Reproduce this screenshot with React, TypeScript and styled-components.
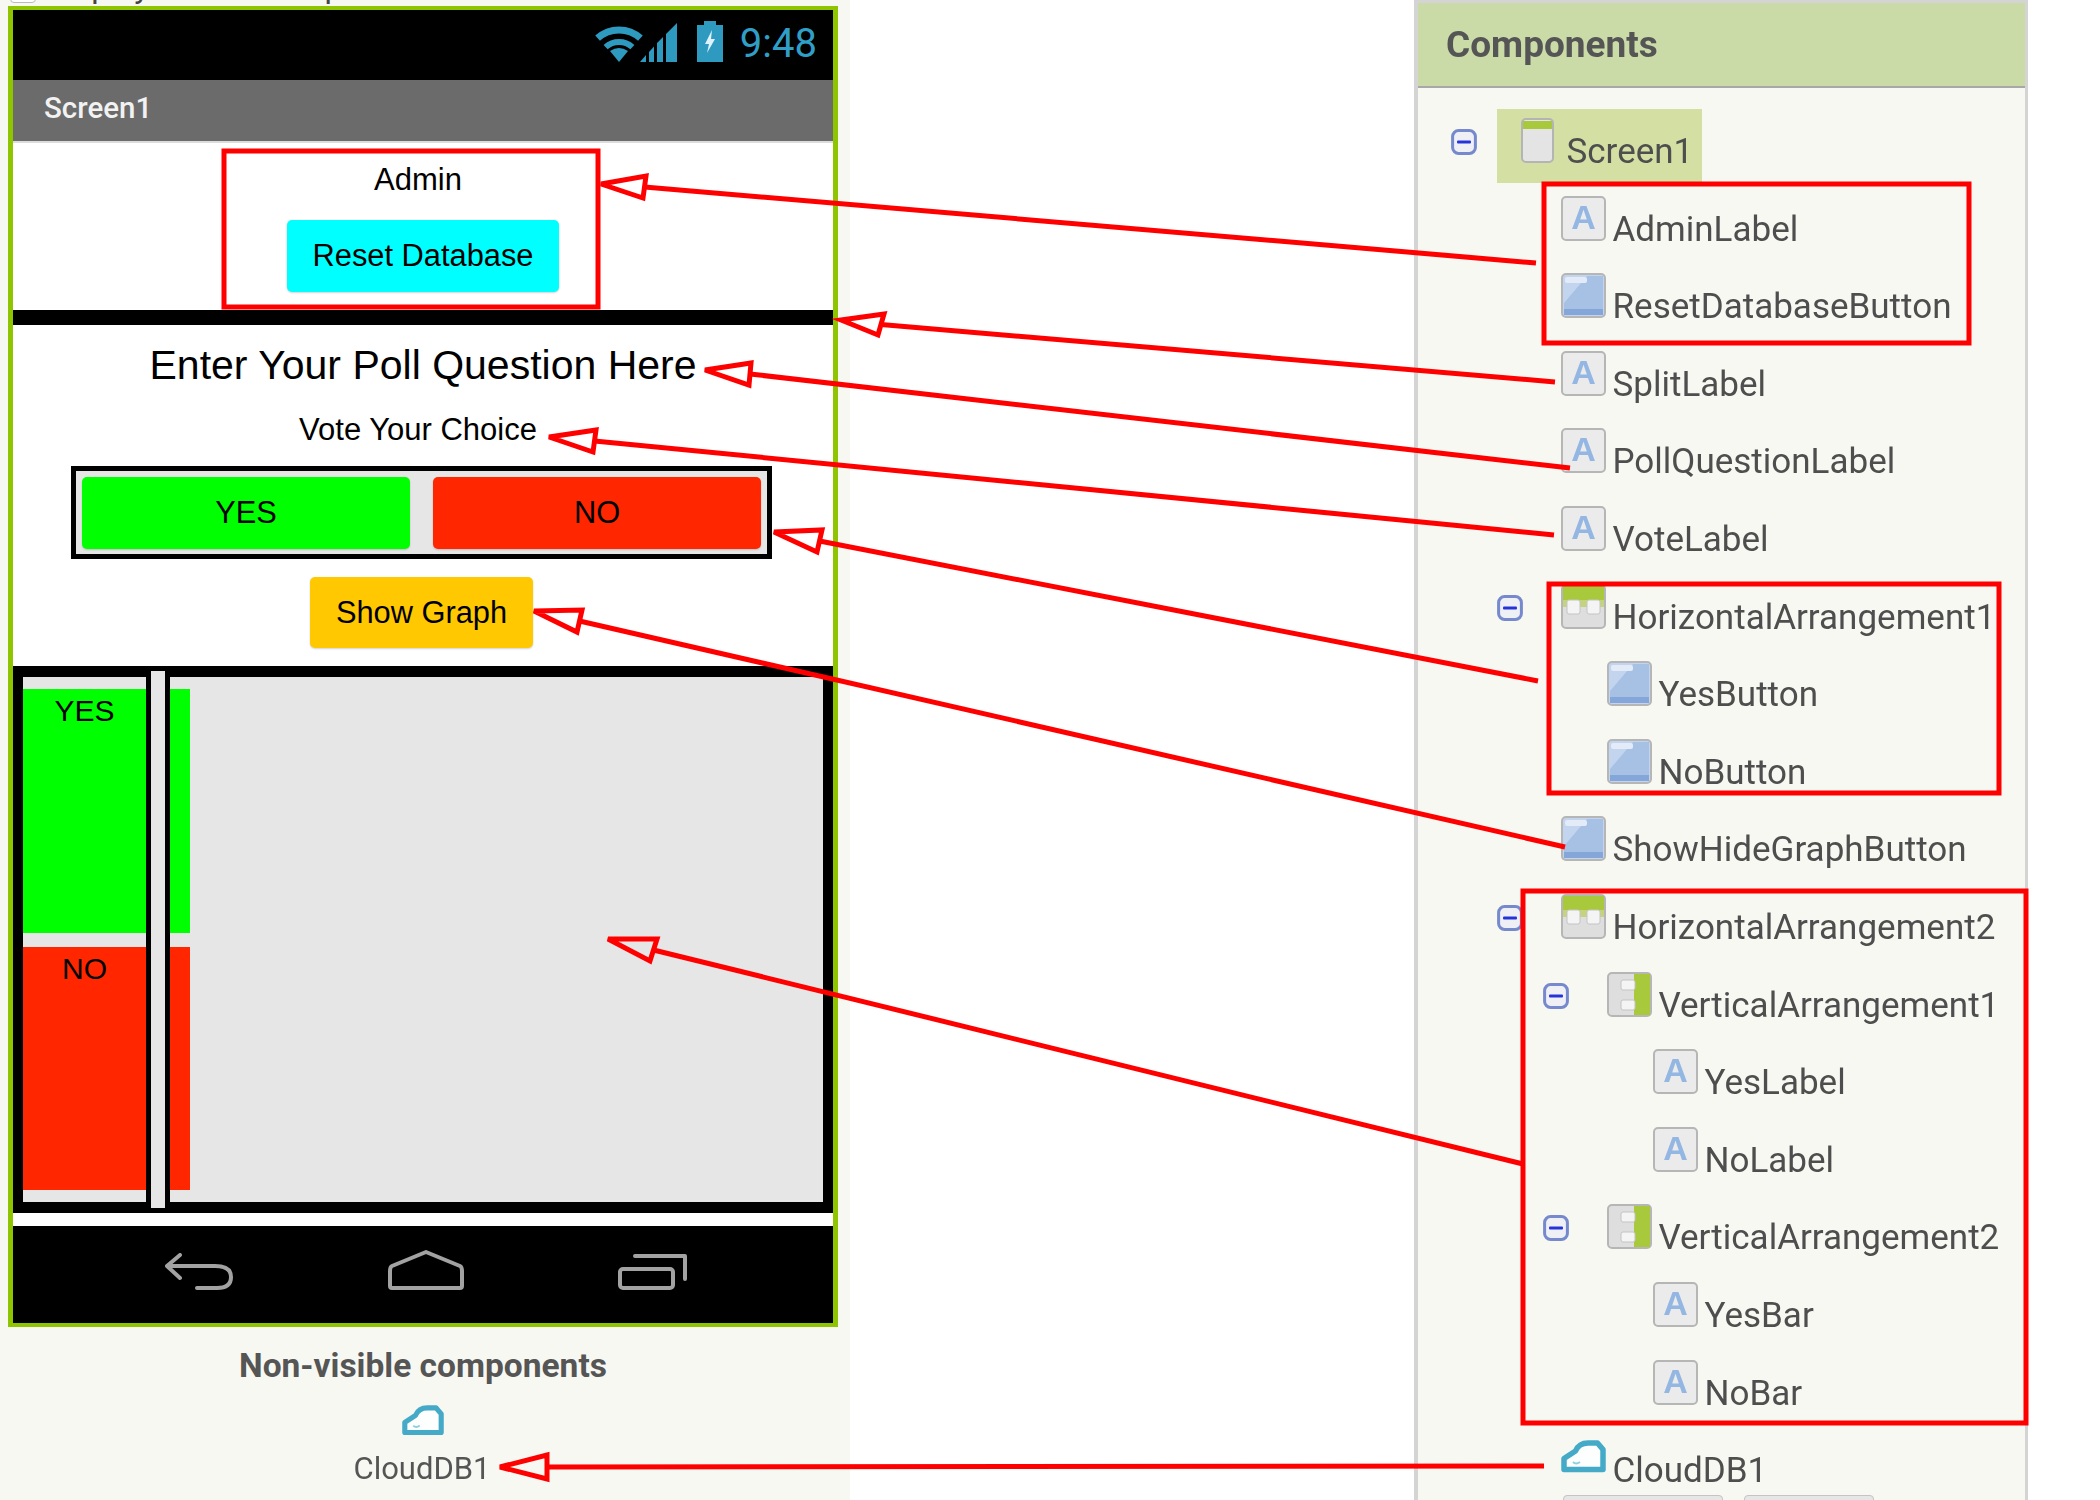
import React from "react";
import styled, { createGlobalStyle } from "styled-components";

const GlobalStyle = createGlobalStyle`
  html, body {
    margin: 0;
    height: 1500px;
    overflow: hidden;
    background: #fff;
  }
`;

const Page = styled.div`
  position: relative;
  display: flex;
  width: 2100px;
  height: 1500px;
  overflow: hidden;
  /* the source screenshot is an upscaled, slightly soft image */
  filter: blur(0.5px);
`;

/* ---------- left side: viewer ---------- */

const Viewer = styled.div`
  width: 850px;
  height: 1500px;
  flex: none;
  background: #f7f8f2;
  font-family: "Liberation Sans", Arial, sans-serif;
`;

const HiddenRow = styled.div`
  display: flex;
  align-items: flex-end;
  gap: 10px;
  height: 6px;
  padding-left: 10px;
  overflow: hidden;
`;

const HiddenBox = styled.div`
  flex: none;
  width: 24px;
  height: 24px;
  margin-bottom: 3px;
  border: 1px solid #bbb;
  border-radius: 4px;
  background: #fff;
`;

const HiddenText = styled.span`
  margin-bottom: 3px;
  font: 400 32px/32px Roboto, sans-serif;
  color: #444;
  white-space: nowrap;
`;

const Phone = styled.div`
  display: flex;
  flex-direction: column;
  box-sizing: border-box;
  width: 830px;
  height: 1321px;
  margin-left: 8px;
  border: 5px solid #8ec400;
  border-top-width: 4px;
  border-bottom-width: 4px;
  background: #fff;
`;

const StatusBar = styled.div`
  display: flex;
  flex: none;
  align-items: flex-start;
  justify-content: flex-end;
  box-sizing: border-box;
  height: 70px;
  padding: 11px 16px 0 0;
  background: #000;
`;

const StatusIcon = styled.svg<{ $gap: number; $top: number }>`
  margin-right: ${(p) => p.$gap}px;
  margin-top: ${(p) => p.$top}px;
  flex: none;
`;

const Clock = styled.span`
  margin-top: 1px;
  font: 400 40px/44px Roboto, sans-serif;
  color: #2f9fc8;
`;

const TitleBar = styled.div`
  display: flex;
  flex: none;
  align-items: center;
  box-sizing: border-box;
  height: 63px;
  padding: 0 0 6px 31px;
  background: #6b6b6b;
  border-bottom: 2px solid #dcdcdc;
  font: 500 29.5px Roboto, sans-serif;
  color: #f2f2f2;
`;

const AdminSection = styled.div`
  display: flex;
  flex: none;
  flex-direction: column;
  align-items: center;
  gap: 3px;
  height: 167px;
`;

const PlainLabel = styled.div<{ $size: number; $height: number; $shift?: number }>`
  flex: none;
  height: ${(p) => p.$height}px;
  margin-right: ${(p) => p.$shift ?? 0}px;
  font-size: ${(p) => p.$size}px;
  line-height: ${(p) => p.$height}px;
  color: #000;
  white-space: nowrap;
`;

const ColorButton = styled.div<{ $bg: string; $w: number; $h?: number; $shift?: number }>`
  display: flex;
  flex: none;
  align-items: center;
  justify-content: center;
  width: ${(p) => p.$w}px;
  height: ${(p) => p.$h ?? 72}px;
  margin-right: ${(p) => p.$shift ?? 0}px;
  border-radius: 5px;
  background: ${(p) => p.$bg};
  box-shadow: 0 1px 2px rgba(0, 0, 0, 0.18);
  font-size: 30.8px;
  color: #000;
`;

const SplitBar = styled.div`
  flex: none;
  height: 15px;
  background: #000;
`;

const VoteSection = styled.div`
  display: flex;
  flex: none;
  flex-direction: column;
  align-items: center;
  height: 341px;
  padding-top: 13px;
  box-sizing: border-box;
`;

const VoteRow = styled.div`
  display: flex;
  flex: none;
  justify-content: space-between;
  box-sizing: border-box;
  width: 701px;
  height: 93px;
  margin: 0 3px 18px 0;
  padding: 6px 6px;
  border: 5px solid #000;
  background: #e6e6e6;
`;

const Graph = styled.div`
  position: relative;
  flex: none;
  box-sizing: border-box;
  height: 547px;
  padding: 11px 10px;
  background: #000;
`;

const GraphPanel = styled.div`
  display: flex;
  flex-direction: column;
  gap: 14px;
  box-sizing: border-box;
  height: 525px;
  padding: 12px 0;
  background: #e6e6e6;
`;

const Bar = styled.div<{ $bg: string }>`
  box-sizing: border-box;
  width: 167px;
  height: 244px;
  padding-right: 44px;
  background: ${(p) => p.$bg};
  font-size: 30px;
  line-height: 44px;
  text-align: center;
  color: #000;
`;

const GraphDivider = styled.div`
  position: absolute;
  top: 5px;
  bottom: 5px;
  left: 133px;
  width: 14px;
  border: solid #000;
  border-width: 0 5px;
  background: #e6e6e6;
`;

const BottomGap = styled.div`
  flex: none;
  height: 13px;
`;

const NavBar = styled.div`
  display: flex;
  flex: 1;
  align-items: flex-end;
  justify-content: space-between;
  padding: 0 145px 33px 152px;
  background: #000;
`;

const NonVisible = styled.div`
  display: flex;
  flex-direction: column;
  align-items: center;
  width: 846px;
  padding-top: 17px;
  font-family: Roboto, sans-serif;
  color: #555;
`;

const NonVisibleTitle = styled.div`
  height: 44px;
  font-size: 33.5px;
  font-weight: 700;
  line-height: 44px;
`;

const NonVisibleIcon = styled.svg`
  margin-top: 17px;
  flex: none;
`;

const NonVisibleName = styled.div`
  margin-top: 14px;
  margin-right: 2px;
  font-size: 31px;
  line-height: 40px;
`;

/* ---------- right side: component tree ---------- */

const TreePanel = styled.div`
  display: flex;
  flex: none;
  flex-direction: column;
  box-sizing: border-box;
  width: 614px;
  height: 1500px;
  margin-left: 564px;
  border: solid #d4d4d4;
  border-width: 3px 3px 0 4px;
  background: #f7f8f2;
  font-family: Roboto, sans-serif;
`;

const TreeHeader = styled.div`
  display: flex;
  flex: none;
  align-items: center;
  box-sizing: border-box;
  height: 85px;
  padding: 0 0 1px 28px;
  background: #cbdba8;
  border-bottom: 2px solid #a8a8a8;
  font-size: 37px;
  font-weight: 700;
  color: #555;
`;

const Tree = styled.div`
  padding-top: 30px;
`;

const TreeRow = styled.div<{ $level: number; $short?: boolean }>`
  display: flex;
  align-items: baseline;
  height: ${(p) => (p.$short ? 58 : 77.6)}px;
  padding-left: ${(p) => 33 + 46 * p.$level}px;
`;

const ExpanderSlot = styled.div`
  flex: none;
  align-self: flex-start;
  width: 64px;
  height: 37px;
  padding-top: 11px;
  box-sizing: border-box;
`;

const RowLabel = styled.div<{ $selected?: boolean }>`
  display: inline-flex;
  align-items: baseline;
  gap: 6.5px;
  ${(p) =>
    p.$selected &&
    `
    margin: -9px 0 0 -18px;
    padding: 9px 9px 9px 18px;
    background: #d3dfa3;
  `}
`;

const RowText = styled.span`
  font-size: 35px;
  line-height: 45px;
  color: #4e4e4e;
  white-space: nowrap;
`;

const TreeButtons = styled.div`
  display: flex;
  gap: 21px;
  padding-left: 145px;
`;

const TreeButton = styled.div<{ $w: number }>`
  width: ${(p) => p.$w}px;
  height: 30px;
  border: 1px solid #c4c4c4;
  border-radius: 4px;
  background: #e6e6e6;
`;

const Annotations = styled.svg`
  position: absolute;
  top: 0;
  left: 0;
  pointer-events: none;
`;

/* ---------- drawings ---------- */

const BLUE = "#2f9ac0";

// one band of the wifi fan, centered on the bottom tip
const wifiArc = (r: number) => {
  const dx = r * 0.669;
  const dy = r * 0.743;
  return `M${24 - dx} ${37 - dy} A${r} ${r} 0 0 1 ${24 + dx} ${37 - dy}`;
};

const WifiIcon = () => (
  <StatusIcon width="48" height="37" viewBox="0 0 48 37" $gap={-3} $top={4}>
    <path d={wifiArc(32)} fill="none" stroke={BLUE} strokeWidth="7" />
    <path d={wifiArc(20)} fill="none" stroke={BLUE} strokeWidth="6" />
    <path d="M24 37 L15 26 Q24 20 33 26 Z" fill={BLUE} />
  </StatusIcon>
);

const SignalIcon = () => (
  <StatusIcon width="37" height="39" viewBox="0 0 37 39" $gap={20} $top={2}>
    <path d="M0 39 L6 32 V39 Z M9 39 V29 L14 23.5 V39 Z M17 39 V20 L23 14 V39 Z M26 39 V11 L37 0 V39 Z" fill={BLUE} />
  </StatusIcon>
);

const BatteryIcon = () => (
  <StatusIcon width="26" height="41" viewBox="0 0 26 41" $gap={17} $top={0}>
    <path d="M7 0 H19 V4 H26 V41 H0 V4 H7 Z" fill={BLUE} />
    <path d="M15 9 L8 23 H12 L10 32 L18 18 H14 Z" fill="#dff2fa" />
  </StatusIcon>
);

const BackIcon = () => (
  <svg width="69" height="37" viewBox="0 0 69 37" fill="none" stroke="#a2a2a2" strokeWidth="4" strokeLinecap="round" strokeLinejoin="round">
    <path d="M15 2 L2 13 L15 25 M2 13 H50 Q66 13 66 24 Q66 35 52 35 H32" />
  </svg>
);

const HomeIcon = () => (
  <svg width="76" height="40" viewBox="0 0 76 40" fill="none" stroke="#a2a2a2" strokeWidth="4" strokeLinejoin="round">
    <path d="M38 2 L4 16 Q2 17 2 21 V36 Q2 38 4 38 H72 Q74 38 74 36 V21 Q74 17 72 16 Z" />
  </svg>
);

const RecentIcon = () => (
  <svg width="70" height="36" viewBox="0 0 70 36" fill="none" stroke="#a2a2a2" strokeWidth="4" strokeLinecap="round" strokeLinejoin="round">
    <rect x="2" y="15" width="53" height="19" rx="3" />
    <path d="M17 2 H67 V25" />
  </svg>
);

const Expander = () => (
  <svg width="26" height="26" viewBox="0 0 26 26" style={{ display: "block" }}>
    <rect x="1.6" y="1.6" width="22.8" height="22.8" rx="6" fill="#eef0f6" stroke="#7689cc" strokeWidth="3" />
    <rect x="6" y="11.5" width="14" height="3" rx="1" fill="#2434d8" />
  </svg>
);

type IconKind = "screen" | "label" | "button" | "hbox" | "vbox" | "cloud";

const Frame = ({ fill }: { fill: string }) => (
  <rect x="1" y="1" width="43" height="43" rx="4" fill={fill} stroke="#b6b6b6" strokeWidth="2" />
);

const CLOUD_PATH = "M3 32.5 V21.5 L14.5 14 Q18 6 27 6 H36.5 L42 12.5 V32.5 Z";

const CloudShape = () => (
  <>
    <path d={CLOUD_PATH} fill="#fdfefe" stroke="#45aac8" strokeWidth="5.5" strokeLinejoin="round" />
    <path d="M12 25 Q15 28 19 25" fill="none" stroke="#8fcfe2" strokeWidth="2" />
  </>
);

const TreeIcon = ({ kind }: { kind: IconKind }) => {
  let body: React.ReactNode = null;
  if (kind === "screen") {
    body = (
      <>
        <rect x="7" y="1" width="31" height="43" rx="4" fill="#e4e4e4" stroke="#b4b4b4" strokeWidth="2" />
        <rect x="8" y="3" width="29" height="8" fill="#a9c93c" />
      </>
    );
  } else if (kind === "label") {
    body = (
      <>
        <Frame fill="#ebebeb" />
        <text x="22.5" y="33" textAnchor="middle" fontFamily="Liberation Sans, sans-serif" fontSize="34" fontWeight="700" fill="#93b6e2">
          A
        </text>
      </>
    );
  } else if (kind === "button") {
    body = (
      <>
        <Frame fill="#c3d5ee" />
        <path d="M3 30 L26 3 H42 V36 H3 Z" fill="#a6c1e4" />
        <rect x="4" y="4" width="22" height="6" rx="2" fill="#e2ebf7" />
        <rect x="3" y="36" width="39" height="6" fill="#85a6d8" />
      </>
    );
  } else if (kind === "hbox") {
    body = (
      <>
        <Frame fill="#dedede" />
        <rect x="2" y="2" width="41" height="14" fill="#a9c93c" />
        <rect x="2" y="16" width="41" height="7" fill="#c4d47e" />
        <rect x="6" y="16" width="13" height="14" rx="2" fill="#f4f4f4" stroke="#c4c4c4" />
        <rect x="26" y="16" width="13" height="14" rx="2" fill="#f4f4f4" stroke="#c4c4c4" />
      </>
    );
  } else if (kind === "vbox") {
    body = (
      <>
        <Frame fill="#dedede" />
        <rect x="27" y="2" width="16" height="41" fill="#a9c93c" />
        <rect x="14" y="8" width="14" height="10" rx="2" fill="#f4f4f4" stroke="#c4c4c4" />
        <rect x="14" y="28" width="14" height="10" rx="2" fill="#f4f4f4" stroke="#c4c4c4" />
      </>
    );
  } else {
    body = <CloudShape />;
  }
  return (
    <svg width="45" height="45" viewBox="0 0 45 45">
      {body}
    </svg>
  );
};

/* ---------- annotation data ---------- */

const boxes = [
  { x: 224, y: 151, w: 374, h: 156 },
  { x: 1544, y: 184, w: 425, h: 159 },
  { x: 1549, y: 584, w: 450, h: 209 },
  { x: 1523, y: 891, w: 503, h: 532 },
];

const arrows = [
  { tip: [601, 184], a: [646, 176], b: [643, 198], end: [1536, 263] },
  { tip: [841, 320], a: [884, 314], b: [878, 335], end: [1555, 382] },
  { tip: [705, 370], a: [751, 363], b: [749, 385], end: [1570, 468] },
  { tip: [549, 437], a: [596, 430], b: [593, 452], end: [1554, 535] },
  { tip: [774, 532], a: [822, 530], b: [817, 552], end: [1538, 681] },
  { tip: [534, 611], a: [582, 610], b: [577, 632], end: [1565, 847] },
  { tip: [608, 939], a: [657, 939], b: [650, 961], end: [1523, 1164] },
  { tip: [500, 1467], a: [547, 1455], b: [547, 1479], end: [1544, 1466] },
];

const treeRows: { name: string; level: number; icon: IconKind; open?: boolean; selected?: boolean }[] = [
  { name: "Screen1", level: 0, icon: "screen", open: true, selected: true },
  { name: "AdminLabel", level: 1, icon: "label" },
  { name: "ResetDatabaseButton", level: 1, icon: "button" },
  { name: "SplitLabel", level: 1, icon: "label" },
  { name: "PollQuestionLabel", level: 1, icon: "label" },
  { name: "VoteLabel", level: 1, icon: "label" },
  { name: "HorizontalArrangement1", level: 1, icon: "hbox", open: true },
  { name: "YesButton", level: 2, icon: "button" },
  { name: "NoButton", level: 2, icon: "button" },
  { name: "ShowHideGraphButton", level: 1, icon: "button" },
  { name: "HorizontalArrangement2", level: 1, icon: "hbox", open: true },
  { name: "VerticalArrangement1", level: 2, icon: "vbox", open: true },
  { name: "YesLabel", level: 3, icon: "label" },
  { name: "NoLabel", level: 3, icon: "label" },
  { name: "VerticalArrangement2", level: 2, icon: "vbox", open: true },
  { name: "YesBar", level: 3, icon: "label" },
  { name: "NoBar", level: 3, icon: "label" },
  { name: "CloudDB1", level: 1, icon: "cloud" },
];

export default function App() {
  return (
    <Page>
      <GlobalStyle />
      <Viewer>
        <HiddenRow>
          <HiddenBox />
          <HiddenText>Display hidden components in Viewer</HiddenText>
        </HiddenRow>
        <Phone>
          <StatusBar>
            <WifiIcon />
            <SignalIcon />
            <BatteryIcon />
            <Clock>9:48</Clock>
          </StatusBar>
          <TitleBar>Screen1</TitleBar>
          <AdminSection>
            <PlainLabel $size={31} $height={74} $shift={10}>
              Admin
            </PlainLabel>
            <ColorButton $bg="#00ffff" $w={272}>
              Reset Database
            </ColorButton>
          </AdminSection>
          <SplitBar />
          <VoteSection>
            <PlainLabel $size={41} $height={55}>
              Enter Your Poll Question Here
            </PlainLabel>
            <PlainLabel $size={31} $height={73} $shift={10}>
              Vote Your Choice
            </PlainLabel>
            <VoteRow>
              <ColorButton $bg="#00ff00" $w={328}>
                YES
              </ColorButton>
              <ColorButton $bg="#ff2600" $w={328}>
                NO
              </ColorButton>
            </VoteRow>
            <ColorButton $bg="#ffc800" $w={223} $h={71} $shift={3}>
              Show Graph
            </ColorButton>
          </VoteSection>
          <Graph>
            <GraphPanel>
              <Bar $bg="#00ff00">YES</Bar>
              <Bar $bg="#ff2600">NO</Bar>
            </GraphPanel>
            <GraphDivider />
          </Graph>
          <BottomGap />
          <NavBar>
            <BackIcon />
            <HomeIcon />
            <RecentIcon />
          </NavBar>
        </Phone>
        <NonVisible>
          <NonVisibleTitle>Non-visible components</NonVisibleTitle>
          <NonVisibleIcon width="42" height="30" viewBox="0 3 45 32">
            <CloudShape />
          </NonVisibleIcon>
          <NonVisibleName>CloudDB1</NonVisibleName>
        </NonVisible>
      </Viewer>

      <TreePanel>
        <TreeHeader>Components</TreeHeader>
        <Tree>
          {treeRows.map((row, i) => (
            <TreeRow key={row.name} $level={row.level} $short={i === treeRows.length - 1}>
              <ExpanderSlot>{row.open && <Expander />}</ExpanderSlot>
              <RowLabel $selected={row.selected}>
                <TreeIcon kind={row.icon} />
                <RowText>{row.name}</RowText>
              </RowLabel>
            </TreeRow>
          ))}
        </Tree>
        <TreeButtons>
          <TreeButton $w={158} />
          <TreeButton $w={128} />
        </TreeButtons>
      </TreePanel>

      <Annotations width="2100" height="1500" viewBox="0 0 2100 1500">
        <g fill="none" stroke="#ff0000" strokeWidth="5">
          {boxes.map((b) => (
            <rect key={b.x} x={b.x} y={b.y} width={b.w} height={b.h} />
          ))}
          {arrows.map((ar) => (
            <g key={ar.tip.join()}>
              <path d={`M${ar.tip} L${ar.a} L${ar.b} Z`} />
              <line x1={(ar.a[0] + ar.b[0]) / 2} y1={(ar.a[1] + ar.b[1]) / 2} x2={ar.end[0]} y2={ar.end[1]} />
            </g>
          ))}
        </g>
      </Annotations>
    </Page>
  );
}
